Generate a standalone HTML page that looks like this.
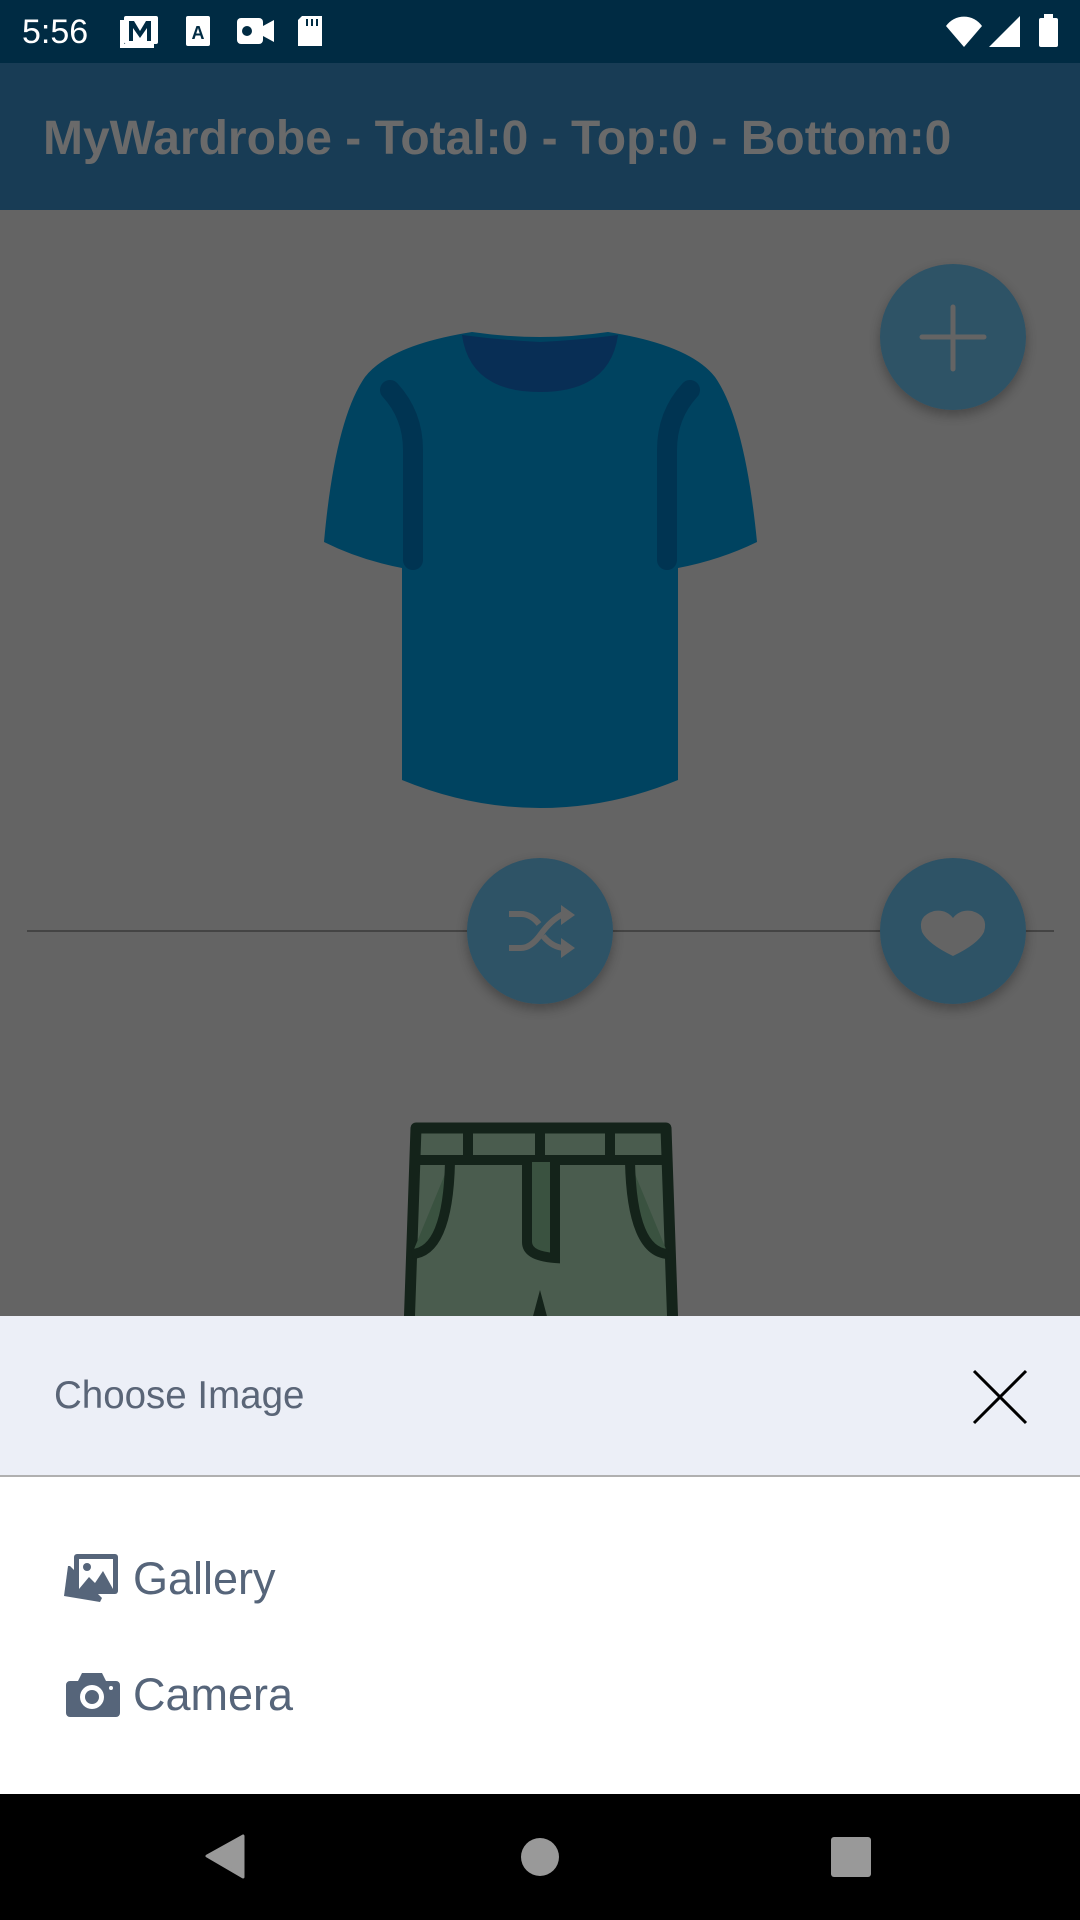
<!DOCTYPE html>
<html><head><meta charset="utf-8"><style>
html,body{margin:0;padding:0;}
body{width:1080px;height:1920px;position:relative;overflow:hidden;background:#646464;font-family:"Liberation Sans",sans-serif;}
.abs{position:absolute;}
</style></head><body>
<div class="abs" style="left:0;top:0;width:1080px;height:63px;background:#002b43;"></div>
<div class="abs" style="left:22px;top:12px;color:#fff;font-size:34px;line-height:40px;">5:56</div>
<svg class="abs" style="left:0;top:0" width="1080" height="63">
 <g fill="#fff">
  <rect x="124" y="16" width="34" height="28" rx="2"/>
  <path d="M120 20v28h34v-4h-30v-24z"/>
  <path d="M129 21h5l6 10 6-10h5v20h-4v-13l-7 10-7-10v13h-4z" fill="#002b43"/>
  <rect x="186" y="16" width="24" height="30" rx="2"/>
  <text x="198" y="39" font-size="18" font-weight="bold" fill="#002b43" text-anchor="middle" font-family="Liberation Sans">A</text>
  <rect x="237" y="18" width="26" height="26" rx="4"/>
  <path d="M263 26l11-6v22l-11-6z"/>
  <circle cx="247" cy="31" r="5" fill="#002b43"/>
  <path d="M302 16h20v30h-24v-26z"/>
  <rect x="306" y="19" width="2" height="7" fill="#002b43"/><rect x="311" y="19" width="2" height="7" fill="#002b43"/><rect x="316" y="19" width="2" height="7" fill="#002b43"/>
  <path d="M946 26a22 22 0 0 1 36 0l-18 21z"/>
  <path d="M1020 16v31h-31z"/>
  <rect x="1039" y="18" width="19" height="29" rx="2"/><rect x="1044" y="14" width="9" height="5"/>
 </g>
</svg>
<div class="abs" style="left:0;top:63px;width:1080px;height:147px;background:#183c55;"></div>
<div class="abs" style="left:43px;top:107px;color:#6a6a6a;font-size:48px;font-weight:bold;line-height:64px;white-space:nowrap;">MyWardrobe - Total:0 - Top:0 - Bottom:0</div>

<svg class="abs" style="left:0;top:210px" width="1080" height="1106" viewBox="0 210 1080 1106">
 <defs><filter id="sh" x="-30%" y="-30%" width="160%" height="170%"><feDropShadow dx="0" dy="5" stdDeviation="6" flood-color="#000" flood-opacity="0.3"/></filter></defs>
 <path d="M472,332 Q540,342 608,332 Q690,345 715,377 Q745,420 757,542 Q720,560 678,568 L678,780 Q610,808 540,808 Q470,808 402,780 L402,568 Q360,560 324,542 Q335,420 365,377 Q390,345 472,332 Z" fill="#004360"/>
 <path d="M462,335 Q470,392 540,392 Q610,392 618,335 Q580,340 540,342 Q500,340 462,335Z" fill="#082e55"/>
 <path d="M390,390 Q413,415 413,450 L413,560" stroke="#003452" stroke-width="20" fill="none" stroke-linecap="round"/>
 <path d="M690,390 Q667,415 667,450 L667,560" stroke="#003452" stroke-width="20" fill="none" stroke-linecap="round"/>
 <line x1="27" y1="931" x2="1054" y2="931" stroke="#444" stroke-width="2"/>
 <circle cx="953" cy="337" r="73" fill="#2e5266" filter="url(#sh)"/>
 <path d="M953 307v62M922 337h62" stroke="#646464" stroke-width="5" stroke-linecap="round"/>
 <circle cx="540" cy="931" r="73" fill="#2e5266" filter="url(#sh)"/>
 <g stroke="#646464" stroke-width="6" fill="none">
  <path d="M509 914h12q10 0 18 10M509 948h12q10 0 20-14t22-20h4"/>
  <path d="M543 936q10 12 22 12h4"/>
 </g>
 <path d="M561 905l14 10-14 10zM561 938l14 10-14 10z" fill="#646464"/>
 <circle cx="953" cy="931" r="73" fill="#2e5266" filter="url(#sh)"/>
 <path d="M953 956 Q928 944 922 932 Q917 916 934 911 Q946 909 953 918 Q960 909 972 911 Q989 916 984 932 Q978 944 953 956Z" fill="#646464"/>
 <path d="M416,1128 L666,1128 L673,1330 L409,1330 Z" fill="#4a5c4e" stroke="#14231a" stroke-width="11" stroke-linejoin="round"/>
 <line x1="416" y1="1160" x2="666" y2="1160" stroke="#14231a" stroke-width="10"/>
 <path d="M468 1128v32M540 1128v32M610 1128v32" stroke="#14231a" stroke-width="10"/>
 <path d="M527 1162v80q0 14 28 16v-96" fill="#3a5240" stroke="#14231a" stroke-width="10"/>
 <path d="M450 1162q-2 90-38 92" fill="#3a5240" stroke="#14231a" stroke-width="10"/>
 <path d="M630 1162q2 90 38 92" fill="#3a5240" stroke="#14231a" stroke-width="10"/>
 <path d="M532 1320l8-30 8 30z" fill="#14231a"/>
</svg>

<div class="abs" style="left:0;top:1316px;width:1080px;height:161px;background:#eceff7;border-bottom:2px solid #b0b0b0;box-sizing:border-box;"></div>
<div class="abs" style="left:54px;top:1373px;color:#5a6577;font-size:38.5px;line-height:46px;">Choose Image</div>
<svg class="abs" style="left:970px;top:1368px" width="60" height="58"><path d="M4 3L56 55M56 3L4 55" stroke="#000" stroke-width="3"/></svg>
<div class="abs" style="left:0;top:1477px;width:1080px;height:317px;background:#fff;"></div>
<svg class="abs" style="left:64px;top:1552px" width="56" height="52">
 <path d="M6 14h-2l-4 30 36 6 2-4z" fill="#56657a"/>
 <rect x="10" y="2" width="44" height="40" rx="3" fill="#56657a"/>
 <rect x="15" y="7" width="34" height="30" fill="#fff"/>
 <circle cx="23" cy="15" r="4" fill="#56657a"/>
 <path d="M15 37l10-12 6 6 8-12 10 18z" fill="#56657a"/>
</svg>
<div class="abs" style="left:133px;top:1551px;color:#56657a;font-size:45px;line-height:56px;">Gallery</div>
<svg class="abs" style="left:66px;top:1671px" width="54" height="46">
 <path d="M16 2h20l4 8h10a4 4 0 0 1 4 4v28a4 4 0 0 1-4 4h-46a4 4 0 0 1-4-4v-28a4 4 0 0 1 4-4h8z" fill="#56657a"/>
 <circle cx="26" cy="26" r="12" fill="#fff"/><circle cx="26" cy="26" r="7" fill="#56657a"/>
 <circle cx="45" cy="17" r="2" fill="#fff"/>
</svg>
<div class="abs" style="left:133px;top:1667px;color:#56657a;font-size:45px;line-height:56px;">Camera</div>
<div class="abs" style="left:0;top:1794px;width:1080px;height:126px;background:#000;"></div>
<svg class="abs" style="left:0;top:1794px" width="1080" height="126">
 <path d="M243 42v41l-36-21z" fill="#999" stroke="#999" stroke-width="3" stroke-linejoin="round"/>
 <circle cx="540" cy="63" r="19" fill="#999"/>
 <rect x="831" y="43" width="40" height="40" rx="3" fill="#999"/>
</svg>
</body></html>
